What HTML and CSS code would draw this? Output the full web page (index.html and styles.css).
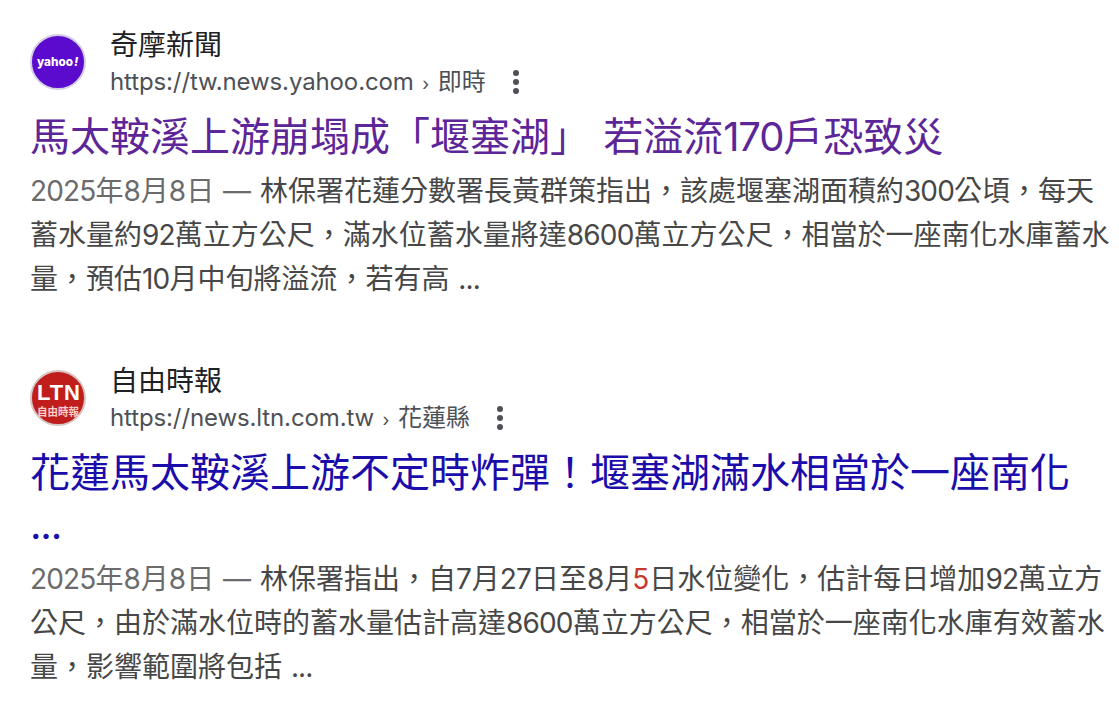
FILE: index.html
```html
<!DOCTYPE html>
<html lang="zh-Hant">
<head>
    <meta charset="UTF-8">
    <meta name="viewport" content="width=device-width, initial-scale=1.0">
    <title>堰塞湖 - 搜尋結果</title>
    <link rel="stylesheet" href="styles.css">
</head>
<body>
    <main class="results">
        <article class="result">
            <header class="source">
                <svg class="favicon" viewBox="0 0 56 56">
                    <circle cx="28" cy="28" r="27" fill="#5b0bcd" stroke="#d5cfe6" stroke-width="2"/>
                    <text class="yahoo" x="7" y="32" textLength="36" lengthAdjust="spacingAndGlyphs">yahoo</text>
                    <text class="yahoo bang" x="44" y="32">!</text>
                </svg>
                <div class="site">
                    <div class="name">奇摩新聞</div>
                    <div class="url">
                        <cite><span class="domain">https://tw.news.yahoo.com</span><span class="arrow">›</span>即時</cite>
                        <svg class="more" viewBox="0 0 6 24"><circle cx="3" cy="3" r="3"/><circle cx="3" cy="12" r="3"/><circle cx="3" cy="21" r="3"/></svg>
                    </div>
                </div>
            </header>
            <h3 class="title visited">馬太鞍溪上游崩塌成「堰塞湖」 若溢流<span class="num">170</span>戶恐致災</h3>
            <p class="snippet">
                <span class="date"><span class="num">2025</span>年8月8日 — </span>林保署花蓮分數署長黃群策指出，該處堰塞湖面積約<span class="num">300</span>公頃，每天<br>
                蓄水量約<span class="num">92</span>萬立方公尺，滿水位蓄水量將達<span class="num">8600</span>萬立方公尺，相當於一座南化水庫蓄水<br>
                量，預估<span class="num">10</span>月中旬將溢流，若有高 <span class="dots">...</span>
            </p>
        </article>

        <article class="result">
            <header class="source">
                <svg class="favicon" viewBox="0 0 56 56">
                    <circle cx="28" cy="28" r="27" fill="#c01e1c" stroke="#d8c4c2" stroke-width="2"/>
                    <text class="ltn" x="7" y="30" textLength="43" lengthAdjust="spacing">LTN</text>
                    <text class="ltn-sub" x="7" y="46" textLength="42" lengthAdjust="spacingAndGlyphs">自由時報</text>
                </svg>
                <div class="site">
                    <div class="name">自由時報</div>
                    <div class="url">
                        <cite><span class="domain">https://news.ltn.com.tw</span><span class="arrow">›</span>花蓮縣</cite>
                        <svg class="more" viewBox="0 0 6 24"><circle cx="3" cy="3" r="3"/><circle cx="3" cy="12" r="3"/><circle cx="3" cy="21" r="3"/></svg>
                    </div>
                </div>
            </header>
            <h3 class="title">花蓮馬太鞍溪上游不定時炸彈！堰塞湖滿水相當於一座南化<br><span class="dots">...</span></h3>
            <p class="snippet">
                <span class="date"><span class="num">2025</span>年8月8日 — </span>林保署指出，自7月<span class="num">27</span>日至8月<span class="hit">5</span>日水位變化，估計每日增加<span class="num">92</span>萬立方<br>
                公尺，由於滿水位時的蓄水量估計高達<span class="num">8600</span>萬立方公尺，相當於一座南化水庫有效蓄水<br>
                量，影響範圍將包括 <span class="dots">...</span>
            </p>
        </article>
    </main>
</body>
</html>
```

FILE: styles.css
```css
* {box-sizing: border-box;}
body {
    margin: 0;
    background-color: #fff;
    font-family: Inter, "Noto Sans CJK TC", sans-serif;
    white-space: nowrap;
    overflow: hidden;
}
.results {
    display: flex;
    flex-direction: column;
    gap: 61px;
    padding: 26px 0 0 30px;
}
.source {
    display: flex;
    align-items: center;
    gap: 24px;
    height: 72px;
}
.favicon {
    flex: none;
    width: 56px;
    height: 56px;
}
.yahoo {
    font: 800 12px Inter, sans-serif;
    fill: #fff;
}
.bang {font-style: italic;}
.ltn {
    font: 700 22px "Liberation Sans", sans-serif;
    fill: #fff;
}
.ltn-sub {
    font: 700 11px "Noto Sans CJK TC", sans-serif;
    fill: #f6cfcb;
}
.site {padding-top: 3px;}
.name {
    font-size: 28px;
    line-height: 37px;
    color: #202124;
}
.url {
    display: flex;
    align-items: center;
    gap: 27px;
    font-size: 24px;
    line-height: 36px;
    color: #4d5156;
}
cite {font-style: normal;}
.domain {letter-spacing: -0.12px;}
.arrow {
    display: inline-block;
    width: 24px;
    font-size: 18px;
    line-height: 1;
    text-align: center;
}
.more {
    width: 6px;
    height: 24px;
    fill: #4d5156;
}
.title {
    margin: 13px 0 0;
    font-size: 40px;
    font-weight: 400;
    line-height: 52px;
    word-spacing: 2px;
    color: #1a0dab;
}
.visited {color: #5c2699;}
.snippet {
    margin: 6px 0 0;
    font-size: 28px;
    line-height: 44px;
    word-spacing: 1px;
    color: #474747;
}
.date {color: #6b6b6b;}
.num {letter-spacing: -0.03em;}
.dots {letter-spacing: -0.03em;}
.hit {color: #c5392f;}
```
